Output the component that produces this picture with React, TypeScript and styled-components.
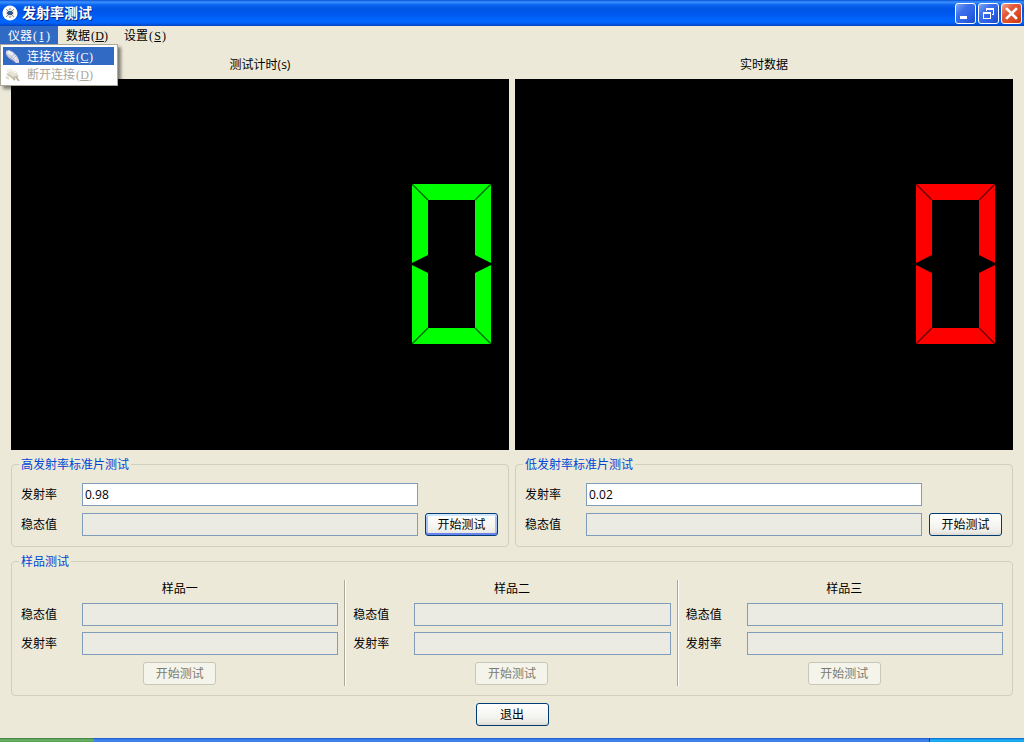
import React, { useId } from 'react';
import styled, { createGlobalStyle, css } from 'styled-components';

const GlobalStyle = createGlobalStyle`
  *, *::before, *::after { box-sizing: border-box; }
  body {
    margin: 0;
    background: #ece9d8;
    color: #000;
    font: 12px/16px "Open Sans", "Noto Sans CJK SC", sans-serif;
  }
  button, input { font: inherit; color: inherit; }
  h1, h2, h3, ul { margin: 0; padding: 0; font-size: inherit; font-weight: normal; }
`;

const Window = styled.div`
  display: flex;
  flex-direction: column;
  min-height: 100vh;
`;

const TitleBar = styled.header`
  display: flex;
  align-items: center;
  gap: 4px;
  height: 26px;
  padding: 0 2px;
  background: linear-gradient(
    #0a4fd6 0,
    #3b93ff 2px,
    #0a62ef 5px,
    #0055e5 9px,
    #0058ee 14px,
    #0066ff 20px,
    #0062f8 23px,
    #0041c0 26px
  );
`;

const Title = styled.h1`
  flex: 1;
  color: #fff;
  font-size: 14px;
  font-weight: bold;
  text-shadow: 1px 1px 0 #0f1e78;
`;

const Controls = styled.div`
  display: flex;
  gap: 2px;
`;

const ControlButton = styled.button<{ $close?: boolean }>`
  width: 21px;
  height: 21px;
  padding: 0;
  border: 1px solid #fff;
  border-radius: 3px;
  background: ${(p) =>
    p.$close
      ? 'linear-gradient(135deg, #f0a48c, #e2593a 35%, #dc4a22 70%, #c33a10)'
      : 'linear-gradient(135deg, #7ea6f5, #3c70ea 35%, #2a5fe6 70%, #1a49c4)'};
  svg { display: block; }
`;

const MenuBar = styled.nav`
  display: flex;
  height: 18px;
`;

const MenuSlot = styled.div`
  position: relative;
`;

const MenuButton = styled.button<{ $open?: boolean }>`
  display: block;
  height: 18px;
  padding: 1px 8px 0;
  border: 0;
  line-height: 17px;
  white-space: nowrap;
  background: ${(p) => (p.$open ? '#316ac5' : 'transparent')};
  color: ${(p) => (p.$open ? '#fff' : '#000')};
`;

const Hotkey = styled.span`
  padding-left: 1px;
  font-family: "Liberation Serif", serif;
  u {
    display: inline-block;
    width: 9px;
    text-align: center;
  }
`;

const Dropdown = styled.ul`
  position: absolute;
  top: 100%;
  left: 0;
  z-index: 1;
  width: 118px;
  padding: 2px 3px 2px 2px;
  border: 1px solid #aca899;
  background: #fff;
  box-shadow: 3px 3px 3px rgba(0, 0, 0, 0.45);
  list-style: none;
`;

const DropdownItem = styled.button<{ $active?: boolean }>`
  display: flex;
  align-items: center;
  gap: 6px;
  width: 100%;
  height: 18px;
  padding: 1px 2px 0;
  border: 0;
  white-space: nowrap;
  background: ${(p) => (p.$active ? '#316ac5' : 'transparent')};
  color: ${(p) => (p.$active ? '#fff' : '#aca899')};
`;

const Content = styled.main`
  flex: 1;
  display: flex;
  flex-direction: column;
  gap: 7px;
  padding: 12px 11px;
`;

const Pair = styled.div<{ $grow?: boolean }>`
  display: grid;
  grid-template-columns: 1fr 1fr;
  gap: 6px;
  ${(p) => p.$grow && css`flex: 1;`}
`;

const Readout = styled.section`
  display: flex;
  flex-direction: column;
`;

const Heading = styled.h2`
  margin-bottom: 5px;
  text-align: center;
  line-height: 18px;
`;

const Screen = styled.div`
  flex: 1;
  display: flex;
  align-items: center;
  justify-content: flex-end;
  min-height: 200px;
  padding: 0 17px 2px 0;
  background: #000;
`;

const Group = styled.fieldset`
  min-width: 0;
  margin: 0;
  padding: 11px 9px 9px 9px;
  border: 1px solid #d0d0bf;
  border-radius: 4px;
`;

const Legend = styled.legend`
  height: 15px;
  margin-left: -2px;
  padding: 0 2px;
  line-height: 15px;
  color: #0046d5;
`;

const StandardGrid = styled.div`
  display: grid;
  grid-template-columns: 54px 1fr 73px;
  align-items: center;
  gap: 7px;
  padding: 0 1px 1px 0;
`;

const Label = styled.label`
  grid-column: 1;
`;

const TextBox = styled.input`
  grid-column: 2;
  width: 100%;
  min-width: 0;
  height: 23px;
  padding: 0 2px;
  border: 1px solid #7f9db9;
  border-radius: 0;
  background: #fff;
  &:read-only { background: #ebebe4; }
`;

const PushButton = styled.button<{ $focus?: boolean }>`
  width: 73px;
  height: 23px;
  padding: 0;
  border: 1px solid #003c74;
  border-radius: 3px;
  background: linear-gradient(#fff, #f4f4f0 60%, #ecebe6 85%, #dcd8cf);
  line-height: 21px;
  ${(p) => p.$focus && css`
    box-shadow: inset 0 2px 0 #cee7ff, inset 0 -2px 0 #6982ee, inset 2px 0 0 #a5c3f3, inset -2px 0 0 #a5c3f3;
  `}
  &:disabled {
    border-color: #c9c7ba;
    background: #f5f4ea;
    color: #7d7b6e;
  }
`;

const Samples = styled.div`
  display: flex;
`;

const Divider = styled.div`
  width: 2px;
  margin: 0 7px 0 6px;
  border-left: 1px solid #aca899;
  border-right: 1px solid #fff;
`;

const Sample = styled.section`
  flex: 1;
  min-width: 0;
  display: flex;
  flex-direction: column;
  align-items: center;
  padding-bottom: 1px;
`;

const SampleGrid = styled.div`
  display: grid;
  grid-template-columns: 54px 1fr;
  align-items: center;
  gap: 6px 7px;
  width: 100%;
  margin-bottom: 7px;
`;

const Footer = styled.footer`
  display: flex;
  justify-content: center;
`;

const TaskBar = styled.div`
  display: flex;
  height: 4px;
  background: linear-gradient(#1f55cc, #3f86ee 2px, #3b7fe8);
`;

const StartEdge = styled.div`
  width: 94px;
  border-top-right-radius: 3px;
  background: linear-gradient(#3a7a3a, #6fb56c 2px, #4fa04c);
`;

const TrayEdge = styled.div`
  width: 95px;
  margin-left: auto;
  border-left: 1px solid #0d3f8e;
  background: linear-gradient(#0f5fd0, #19b2f2 2px, #17a4ec);
`;

const AppIcon = () => (
  <svg width="16" height="16" viewBox="0 0 16 16" aria-hidden="true">
    <circle cx="8" cy="8" r="7.5" fill="#fff" />
    <circle cx="8" cy="8" r="4.2" fill="#e2e2de" />
    <path d="M4 4l2 2M12 4l-2 2M4 12l2-2M12 12l-2-2M8 3v2M8 11v2" stroke="#8c8c84" />
    <path d="M6 6h4v4H6z" fill="#2f5a92" />
    <path d="M5 7h1v2H5zM10 7h1v2h-1z" fill="#555" />
  </svg>
);

const PlugIcon = ({ off }: { off?: boolean }) =>
  off ? (
    <svg width="16" height="16" viewBox="0 0 16 16" aria-hidden="true">
      <path d="M2 3l4-1 6 3 1 4-4 2-6-3z" fill="#e6e3d4" />
      <path d="M3 4l3-1 5 3" fill="none" stroke="#f6f4ea" strokeWidth="2" />
      <path d="M2 7l6 4 5-2" fill="none" stroke="#c9c5b2" strokeWidth="2" />
      <path d="M8 11l2 2M11 10l3 4" stroke="#bdb9a6" strokeWidth="2" />
      <path d="M1 10l3 2" stroke="#dcd8c8" strokeWidth="2" />
    </svg>
  ) : (
    <svg width="16" height="16" viewBox="0 0 16 16" aria-hidden="true">
      <path d="M1 2l3-1 4 2 4 4 2 4 0 3-3 0-4-3-4-3-2-3z" fill="#d5d5e6" />
      <path d="M3 3l4 2 4 5" fill="none" stroke="#f4f4fb" strokeWidth="2" />
      <path d="M1 5l3 4 4 2 3 3" fill="none" stroke="#a3a4c0" />
      <path d="M6 9l3-4M8 10l3-3" stroke="#b0b1c8" />
    </svg>
  );

const SegmentZero = ({ color, seam }: { color: string; seam: string }) => (
  <svg width="80" height="160" viewBox="0 0 80 160" role="img" aria-label="0">
    <path
      fill={color}
      d="M0 0H79V79L63 71V16H16V71L0 79ZM0 81L16 89V144H63V89L79 81V160H0Z"
    />
    <path d="M0 0L16 16M79 0L63 16M0 160L16 144M79 160L63 144" stroke={seam} strokeWidth="1.3" />
  </svg>
);

const Key = ({ k }: { k: string }) => (
  <Hotkey>(<u>{k}</u>)</Hotkey>
);

const StandardGroup = ({ title, value, focus }: { title: string; value: string; focus?: boolean }) => {
  const id = useId();
  return (
    <Group>
      <Legend>{title}</Legend>
      <StandardGrid>
        <Label htmlFor={id + 'e'}>发射率</Label>
        <TextBox id={id + 'e'} defaultValue={value} />
        <Label htmlFor={id + 's'}>稳态值</Label>
        <TextBox id={id + 's'} readOnly />
        <PushButton type="button" $focus={focus}>开始测试</PushButton>
      </StandardGrid>
    </Group>
  );
};

const SampleColumn = ({ title }: { title: string }) => {
  const id = useId();
  return (
    <Sample>
      <Heading as="h3">{title}</Heading>
      <SampleGrid>
        <Label htmlFor={id + 's'}>稳态值</Label>
        <TextBox id={id + 's'} readOnly />
        <Label htmlFor={id + 'e'}>发射率</Label>
        <TextBox id={id + 'e'} readOnly />
      </SampleGrid>
      <PushButton type="button" disabled>开始测试</PushButton>
    </Sample>
  );
};

export default function App() {
  return (
    <Window>
      <GlobalStyle />
      <TitleBar>
        <AppIcon />
        <Title>发射率测试</Title>
        <Controls>
          <ControlButton type="button" aria-label="最小化">
            <svg width="19" height="19" viewBox="0 0 19 19"><path d="M4 12h7v3H4z" fill="#fff" /></svg>
          </ControlButton>
          <ControlButton type="button" aria-label="还原">
            <svg width="19" height="19" viewBox="0 0 19 19" shapeRendering="crispEdges">
              <path d="M7 4h8v7h-2v-1h1V6H8v1H7z M4 8h8v7H4z M5 10v4h6v-4z" fill="#fff" fillRule="evenodd" />
            </svg>
          </ControlButton>
          <ControlButton type="button" aria-label="关闭" $close>
            <svg width="19" height="19" viewBox="0 0 19 19"><path d="M5 5l9 9M14 5l-9 9" stroke="#fff" strokeWidth="2.6" strokeLinecap="square" /></svg>
          </ControlButton>
        </Controls>
      </TitleBar>
      <MenuBar>
        <MenuSlot>
          <MenuButton type="button" $open aria-expanded="true">仪器<Key k="I" /></MenuButton>
          <Dropdown>
            <li><DropdownItem type="button" $active><PlugIcon /><span>连接仪器<Key k="C" /></span></DropdownItem></li>
            <li><DropdownItem type="button" disabled><PlugIcon off /><span>断开连接<Key k="D" /></span></DropdownItem></li>
          </Dropdown>
        </MenuSlot>
        <MenuSlot><MenuButton type="button">数据<Key k="D" /></MenuButton></MenuSlot>
        <MenuSlot><MenuButton type="button">设置<Key k="S" /></MenuButton></MenuSlot>
      </MenuBar>
      <Content>
        <Pair $grow>
          <Readout>
            <Heading>测试计时(s)</Heading>
            <Screen><SegmentZero color="#00ff00" seam="#006000" /></Screen>
          </Readout>
          <Readout>
            <Heading>实时数据</Heading>
            <Screen><SegmentZero color="#ff0000" seam="#600000" /></Screen>
          </Readout>
        </Pair>
        <Pair>
          <StandardGroup title="高发射率标准片测试" value="0.98" focus />
          <StandardGroup title="低发射率标准片测试" value="0.02" />
        </Pair>
        <Group>
          <Legend>样品测试</Legend>
          <Samples>
            <SampleColumn title="样品一" />
            <Divider />
            <SampleColumn title="样品二" />
            <Divider />
            <SampleColumn title="样品三" />
          </Samples>
        </Group>
        <Footer>
          <PushButton type="button">退出</PushButton>
        </Footer>
      </Content>
      <TaskBar>
        <StartEdge />
        <TrayEdge />
      </TaskBar>
    </Window>
  );
}
